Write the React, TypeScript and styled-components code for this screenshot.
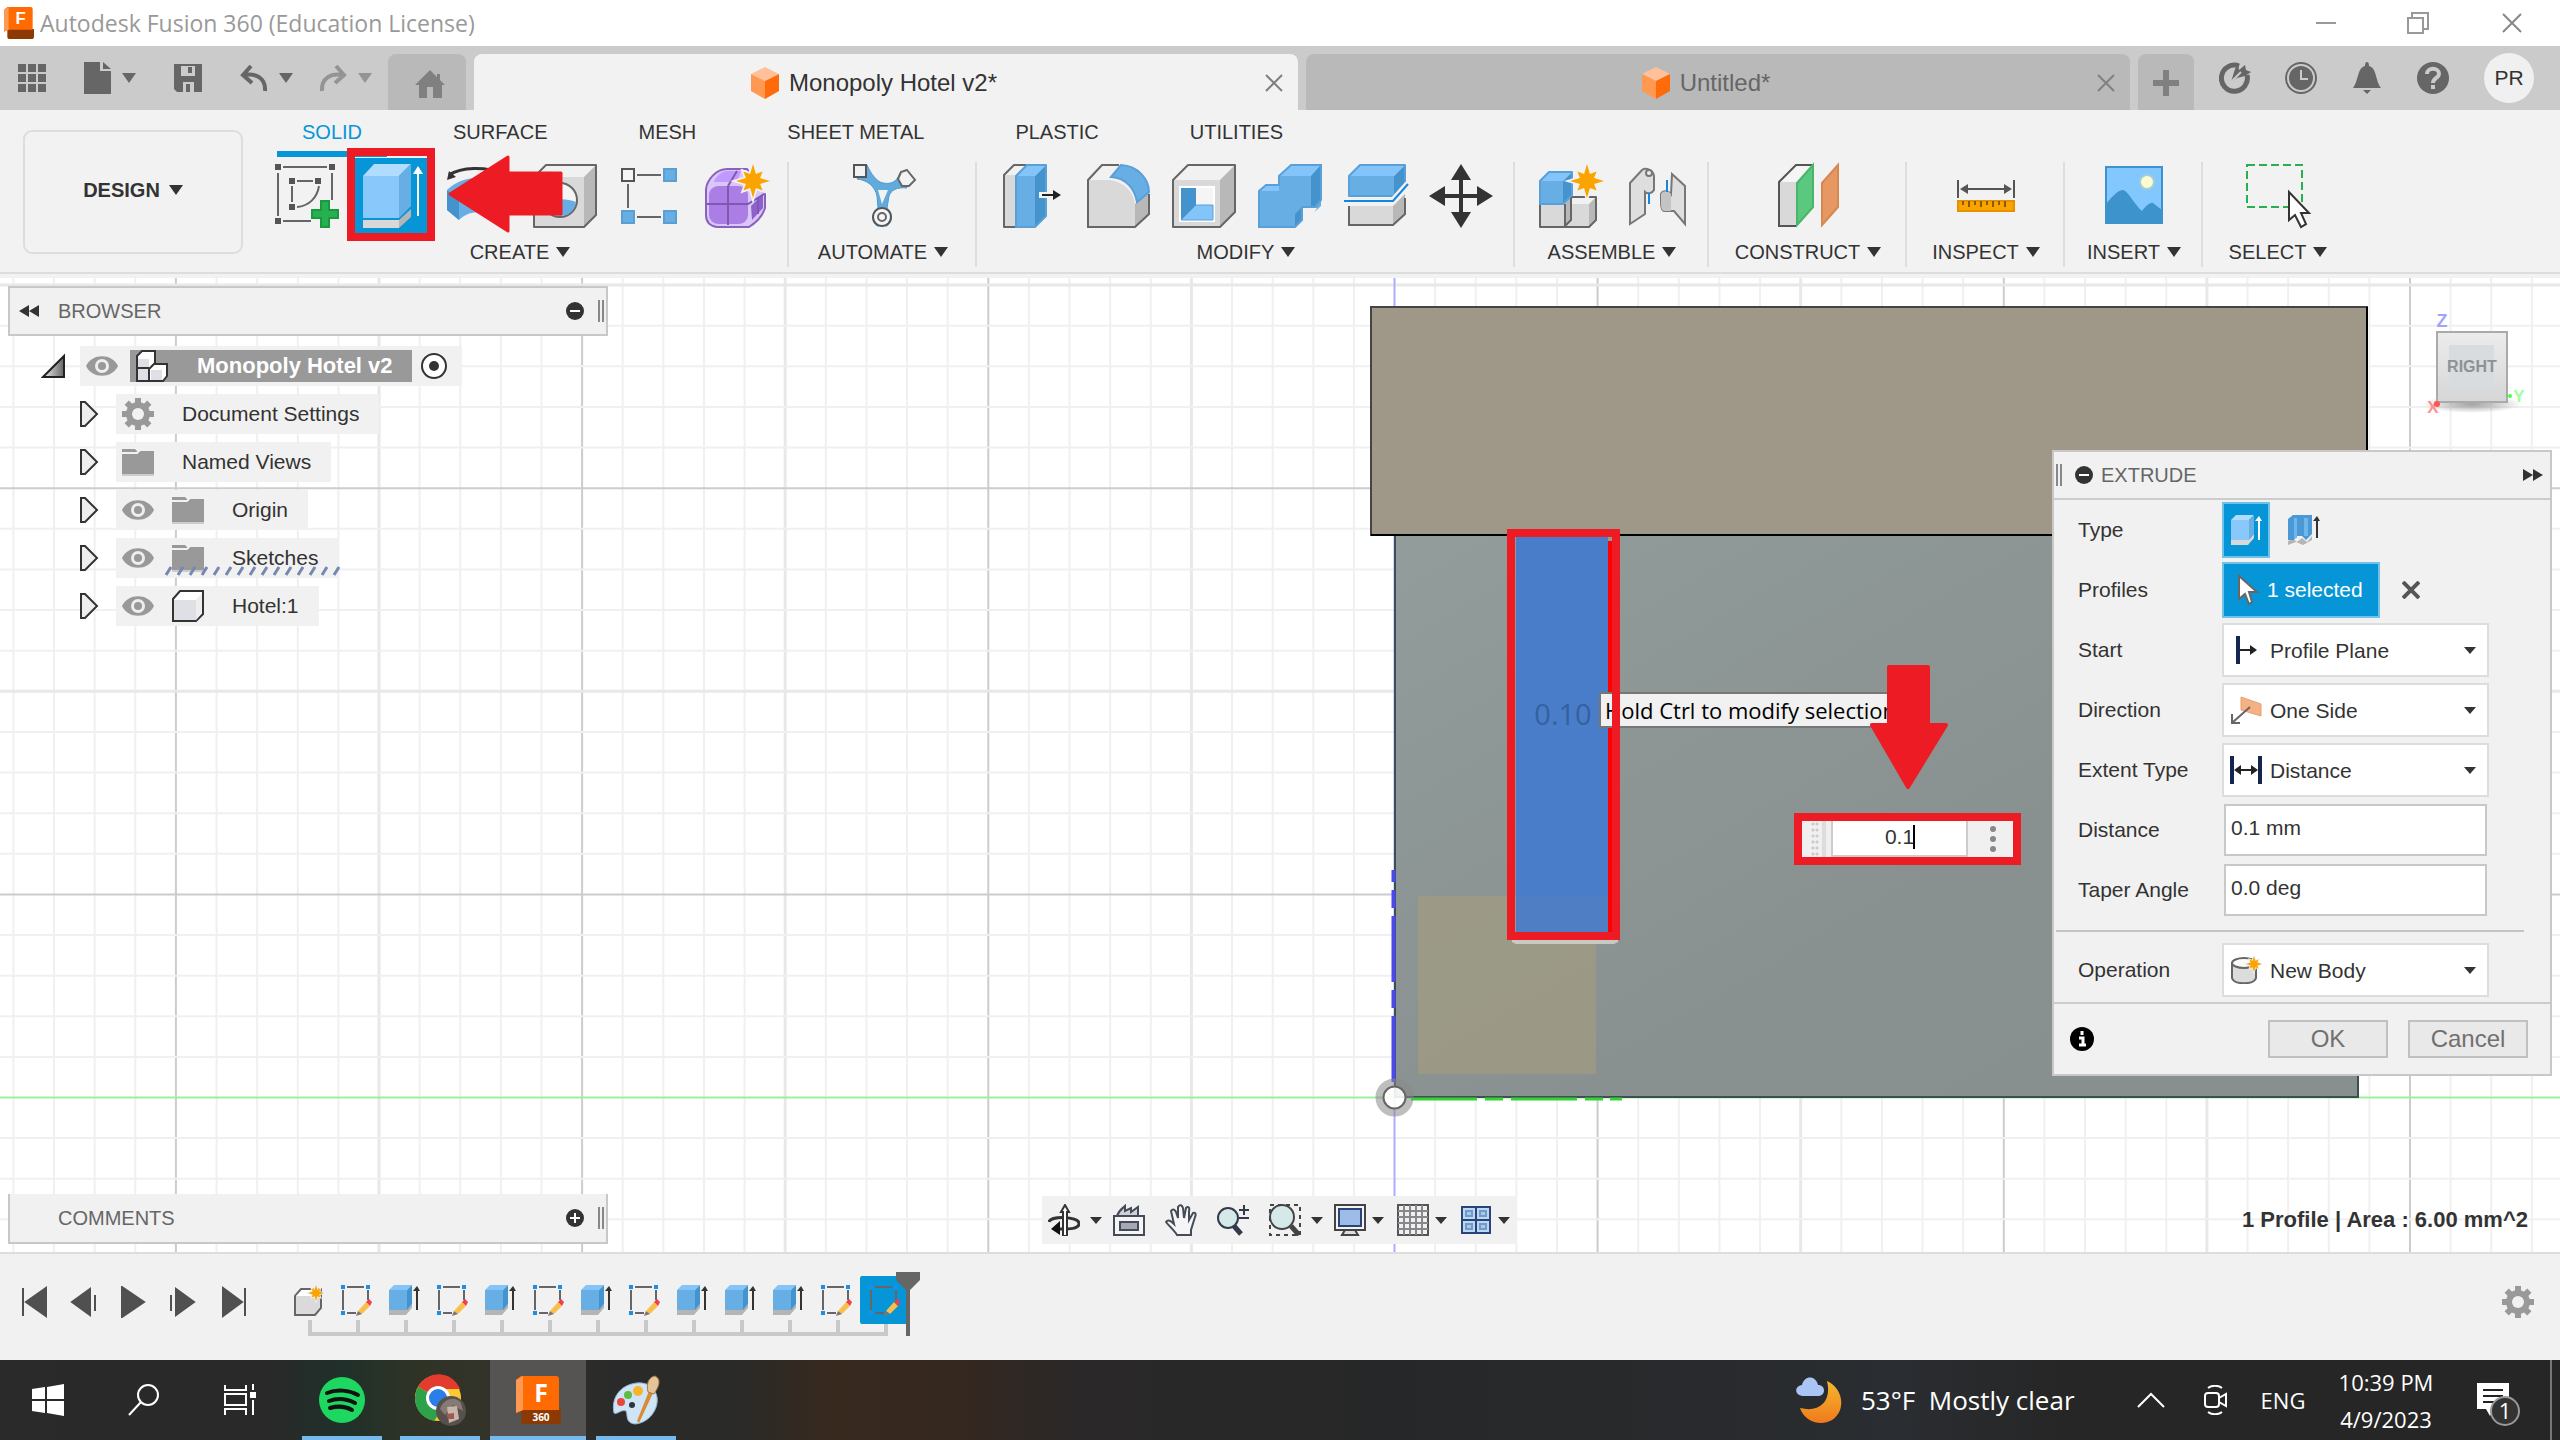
import React from "react";
import styled, { createGlobalStyle, css } from "styled-components";

const GlobalStyle = createGlobalStyle`
  *, *::before, *::after { box-sizing: border-box; }
  body { margin: 0; background: #f1f1f1; font-family: "Liberation Sans", Arial, sans-serif; color: #333; }
  button, input, select { font: inherit; color: inherit; margin: 0; padding: 0; border: 0; background: none; border-radius: 0; }
  button { cursor: pointer; }
  svg { display: block; flex: none; }
`;

const segoe = `"Open Sans", "Noto Sans", sans-serif`;
const red = "#ed1c24";
const blue = "#0696d7";

/* ---------- shared ---------- */

const Shell = styled.div`
  min-height: 100vh;
  display: flex;
  flex-direction: column;
  overflow: hidden;
`;

const Caret = styled.span<{ $tone?: string; $small?: boolean }>`
  display: inline-block;
  flex: none;
  width: 0;
  height: 0;
  border-style: solid;
  border-color: ${(p) => p.$tone || "#333"} transparent transparent;
  border-width: ${(p) => (p.$small ? "7px 6px 0" : "10px 7px 0")};
`;

const IconButton = styled.button<{ $w: number }>`
  display: flex;
  align-items: center;
  justify-content: center;
  flex: none;
  width: ${(p) => p.$w}px;
`;

/* ---------- title bar ---------- */

const TitleBar = styled.header`
  height: 46px;
  display: flex;
  align-items: center;
  background: #fff;
  padding-left: 4px;
`;

const AppTitle = styled.h1`
  flex: 1;
  margin: 0 0 0 6px;
  font: 400 23px/32px ${segoe};
  color: #999;
  white-space: nowrap;
`;

/* ---------- document tabs ---------- */

const TabBar = styled.nav`
  height: 64px;
  display: flex;
  align-items: stretch;
  gap: 8px;
  padding-top: 8px;
  background: #cbcbcb;
`;

const QuickTools = styled.div`
  width: 380px;
  flex: none;
  display: flex;
  align-items: center;
  padding: 0 0 8px 16px;
`;

const ToolWithCaret = styled.button<{ $gap: number }>`
  display: flex;
  align-items: center;
  gap: 11px;
  margin-left: ${(p) => p.$gap}px;
`;

const topTab = css`
  border-radius: 8px 8px 0 0;
  display: flex;
  align-items: center;
  justify-content: center;
  padding-top: 2px;
`;

const SquareTab = styled.button<{ $w: number }>`
  ${topTab}
  width: ${(p) => p.$w}px;
  flex: none;
  background: #b9b9b9;
`;

const HomeTab = styled(SquareTab)`
  padding: 4px 0 0 6px;
`;

const DocTab = styled.div<{ $active?: boolean }>`
  ${topTab}
  flex: 1;
  padding-left: 24px;
  background: ${(p) => (p.$active ? "#f2f2f2" : "#b9b9b9")};
  color: ${(p) => (p.$active ? "#333" : "#666")};
`;

const DocName = styled.button`
  flex: 1;
  display: flex;
  align-items: center;
  justify-content: center;
  gap: 10px;
  font-size: 24px;
  line-height: 30px;
`;

const Account = styled.div`
  width: 358px;
  flex: none;
  display: flex;
  align-items: center;
  padding-bottom: 8px;
`;

const Avatar = styled.button`
  width: 50px;
  height: 50px;
  margin-left: 18px;
  border-radius: 50%;
  background: #f0f0f0;
  font-size: 21px;
`;

/* ---------- ribbon ---------- */

const Ribbon = styled.section`
  height: 168px;
  display: flex;
  gap: 8px;
  padding-left: 23px;
  background: linear-gradient(#f2f2f2 162px, #ddd 162px, #ddd 164px, #f2f2f2 164px);
`;

const DesignButton = styled.button`
  width: 220px;
  height: 124px;
  flex: none;
  margin-top: 20px;
  padding-bottom: 4px;
  border: 2px solid #ddd;
  border-radius: 9px;
  display: flex;
  align-items: center;
  justify-content: center;
  gap: 9px;
  font-size: 20px;
  font-weight: 700;
`;

const RibbonMain = styled.div`
  flex: 1;
`;

const RibbonTabs = styled.div`
  display: flex;
  gap: 41px;
  height: 48px;
  padding-left: 26px;
`;

const RibbonTab = styled.button<{ $active?: boolean }>`
  height: 47px;
  padding: 4px 25px 0;
  font-size: 20px;
  color: ${(p) => (p.$active ? blue : "#333")};
  border-bottom: 6px solid ${(p) => (p.$active ? blue : "transparent")};
  white-space: nowrap;
`;

const Groups = styled.div`
  display: flex;
`;

const Group = styled.div<{ $w: number }>`
  position: relative;
  width: ${(p) => p.$w}px;
  display: flex;
  flex-direction: column;
  align-items: center;
  &:not(:last-child)::after {
    content: "";
    position: absolute;
    right: 0;
    top: 4px;
    bottom: -2px;
    width: 2px;
    background: #dedede;
  }
`;

const GroupIcons = styled.div`
  display: flex;
  gap: 14px;
`;

const CommandButton = styled.button<{ $active?: boolean }>`
  position: relative;
  width: 72px;
  height: 76px;
  display: flex;
  align-items: center;
  justify-content: center;
  background: ${(p) => (p.$active ? blue : "none")};
`;

const GroupLabel = styled.button`
  display: flex;
  align-items: center;
  gap: 7px;
  margin-top: 5px;
  font-size: 20px;
  line-height: 26px;
  white-space: nowrap;
`;

const CommandMark = styled.span`
  position: absolute;
  inset: -10px -8px -7px;
  border: 8px solid ${red};
  z-index: 2;
`;

const PointerMark = styled.svg`
  position: absolute;
  left: 93px;
  top: -3px;
  z-index: 3;
`;

/* ---------- canvas ---------- */

const Canvas = styled.main`
  position: relative;
  flex: 1;
  min-height: 974px;
  overflow: hidden;
  background: #fff;
`;

const Scene = styled.svg`
  position: absolute;
  inset: 0;
  width: 100%;
  height: 100%;
`;

const MarkLayer = styled(Scene)`
  pointer-events: none;
`;

const BrowserArea = styled.aside`
  position: absolute;
  left: 8px;
  top: 8px;
  width: 600px;
`;

const PanelBar = styled.div`
  display: flex;
  align-items: center;
  height: 50px;
  border: 2px solid #c8c8c8;
  background: #f1f1f1;
  color: #666;
  font-size: 20px;
`;

const PanelCollapse = styled.button`
  width: 48px;
  padding-left: 9px;
`;

const PanelTitle = styled.h2`
  flex: 1;
  margin: 0;
  font-size: 20px;
  font-weight: 400;
`;

const Grip = styled.span`
  width: 6px;
  height: 22px;
  border: solid #888;
  border-width: 0 2px;
  margin: 0 2px 0 14px;
`;

const CommentsPanel = styled.section`
  position: absolute;
  left: 8px;
  bottom: 8px;
  width: 600px;
  & > div { border-top: 0; }
`;

const Tree = styled.ul`
  list-style: none;
  margin: 10px 0 0;
  padding: 0;
  display: flex;
  flex-direction: column;
  gap: 8px;
`;

const TreeRow = styled.li<{ $root?: boolean }>`
  display: flex;
  align-items: center;
  height: 40px;
  padding-left: ${(p) => (p.$root ? 33 : 71)}px;
  gap: ${(p) => (p.$root ? 14 : 17)}px;
  font-size: 21px;
`;

const TreeItem = styled.div`
  position: relative;
  height: 40px;
  display: flex;
  align-items: center;
  gap: 18px;
  padding: 0 20px 0 6px;
  background: #f1f1f1;
`;

const TreeName = styled.button`
  padding-left: 10px;
  white-space: nowrap;
`;

const RootItem = styled(TreeItem)`
  gap: 8px;
  padding-right: 14px;
`;

const RootName = styled.button`
  height: 32px;
  display: flex;
  align-items: center;
  gap: 29px;
  padding: 0 19px 0 6px;
  margin-left: 4px;
  background: #999;
  color: #fff;
  font-size: 22px;
  font-weight: 700;
  white-space: nowrap;
`;

const Squiggle = styled.svg`
  position: absolute;
  left: 48px;
  bottom: 2px;
`;

const NavBar = styled.div`
  position: absolute;
  left: 50%;
  bottom: 8px;
  margin-left: -238px;
  height: 48px;
  display: flex;
  align-items: center;
  gap: 20px;
  padding: 0 7px 0 6px;
  background: #f1f1f1;
`;

const NavButton = styled.button<{ $tight?: boolean }>`
  display: flex;
  align-items: center;
  gap: ${(p) => (p.$tight ? 6 : 10)}px;
  margin-right: ${(p) => (p.$tight ? -7 : -9)}px;
  &:nth-child(n + 2):nth-child(-n + 4) { margin-right: 0; }
  &:last-child { margin-right: 0; }
`;

const StatusText = styled.output`
  position: absolute;
  right: 32px;
  bottom: 18px;
  font-size: 22px;
  line-height: 28px;
  font-weight: 700;
`;

const Hint = styled.div`
  position: absolute;
  left: 1599px;
  top: 414px;
  height: 36px;
  padding: 0 4px;
  border: 2px solid #777;
  background: #f1f1f1;
  color: #000;
  font: 400 22px/33px ${segoe};
  white-space: nowrap;
`;

const ValueBox = styled.div`
  position: absolute;
  left: 1794px;
  top: 535px;
  width: 227px;
  height: 52px;
  display: flex;
  align-items: stretch;
  border: 8px solid ${red};
  background: #f0f0f0;
`;

const ValueGrip = styled.span`
  width: 29px;
  background:
    linear-gradient(90deg, transparent 20px, #ddd 20px, #ddd 24px, transparent 24px),
    linear-gradient(90deg, #f0f0f0 9px, transparent 9px, transparent 17px, #f0f0f0 17px),
    radial-gradient(circle, #ccc 1px, transparent 2px) 9px 0 / 4px 6px;
`;

const ValueField = styled.label`
  position: relative;
  width: 137px;
`;

const ValueInput = styled.input`
  width: 100%;
  height: 100%;
  padding-bottom: 2px;
  border: solid #ccc;
  border-width: 0 2px 2px;
  background: #fff;
  text-align: center;
  font-size: 21px;
  outline: none;
  caret-color: transparent;
`;

const TextCaret = styled.span`
  position: absolute;
  left: 82px;
  top: 4px;
  width: 2px;
  height: 24px;
  background: #000;
`;

const ValueMenu = styled.button`
  flex: 1;
  display: flex;
  align-items: center;
  justify-content: center;
  padding-left: 4px;
`;

/* ---------- view cube ---------- */

const ViewCube = styled.button`
  position: absolute;
  right: 28px;
  top: 28px;
`;

/* ---------- extrude dialog ---------- */

const Dialog = styled.form`
  position: absolute;
  right: 8px;
  top: 172px;
  width: 500px;
  border: 2px solid #c8c8c8;
  background: #f1f1f1;
`;

const DialogHead = styled.div`
  height: 48px;
  display: flex;
  align-items: center;
  gap: 8px;
  padding: 0 7px 0 2px;
  border-bottom: 2px solid #ccc;
  color: #666;
`;

const DialogGrip = styled(Grip)`
  margin: 0 5px 0 0;
`;

const DialogRows = styled.div`
  display: flex;
  flex-direction: column;
  gap: 4px;
  padding: 2px 61px 4px 24px;
`;

const DialogRow = styled.div`
  display: flex;
  align-items: center;
  height: 56px;
  font-size: 21px;
`;

const RowLabel = styled.label`
  width: 144px;
  flex: none;
  white-space: nowrap;
`;

const TypeButton = styled.button<{ $active?: boolean }>`
  width: 48px;
  height: 56px;
  margin-right: 10px;
  display: flex;
  align-items: center;
  justify-content: center;
  border: 2px solid ${(p) => (p.$active ? "#6fc1e6" : "transparent")};
  background: ${(p) => (p.$active ? blue : "none")};
`;

const SelectionButton = styled.button`
  width: 158px;
  height: 56px;
  display: flex;
  align-items: center;
  gap: 8px;
  padding-left: 13px;
  border: 2px solid #6fc1e6;
  background: ${blue};
  color: #fff;
`;

const ClearButton = styled.button`
  margin-left: 22px;
`;

const SelectBox = styled.div`
  flex: 1;
  height: 54px;
  display: flex;
  align-items: center;
  padding: 0 11px 0 6px;
  gap: 8px;
  border: 2px solid #ddd;
  background: #fff;
`;

const Select = styled.select`
  flex: 1;
  height: 100%;
  appearance: none;
  outline: none;
`;

const TextField = styled.input`
  flex: 1;
  min-width: 0;
  height: 52px;
  margin: 0 2px;
  padding: 0 5px 4px;
  border: 2px solid #c8c8c8;
  background: #fff;
  outline: none;
`;

const Rule = styled.hr`
  width: 468px;
  margin: 8px 0 6px -22px;
  border: 0;
  border-top: 2px solid #c4c4c4;
`;

const DialogFoot = styled.div`
  height: 72px;
  display: flex;
  align-items: center;
  gap: 20px;
  padding: 0 22px 0 16px;
  border-top: 2px solid #ccc;
`;

const FootButton = styled.button`
  width: 120px;
  height: 38px;
  border: 2px solid #c0c0c0;
  background: #e9e9e9;
  color: #707070;
  font-size: 24px;
  line-height: 32px;
`;

const InfoButton = styled.button`
  margin-right: auto;
`;

/* ---------- timeline ---------- */

const Timeline = styled.section`
  height: 108px;
  display: flex;
  align-items: flex-start;
  border-top: 2px solid #ddd;
  background: #f1f1f1;
`;

const Playback = styled.div`
  width: 284px;
  display: flex;
  gap: 18px;
  padding: 32px 0 0 18px;
`;

const Track = styled.div`
  position: relative;
  padding-top: 22px;
`;

const Features = styled.div`
  position: relative;
  display: flex;
  z-index: 1;
`;

const Feature = styled.button<{ $active?: boolean }>`
  width: 48px;
  height: 48px;
  display: flex;
  align-items: center;
  justify-content: center;
  border-radius: 2px;
  background: ${(p) => (p.$active ? blue : "none")};
`;

const Bracket = styled.div`
  display: flex;
  margin: -4px 20px 0 24px;
  border: solid #c9c9c9;
  border-width: 0 4px 4px 0;
  height: 16px;
`;

const BracketStep = styled.span`
  flex: 1;
  border-left: 4px solid #c9c9c9;
`;

const Marker = styled.svg`
  position: absolute;
  right: -12px;
  top: 18px;
  z-index: 2;
`;

const SettingsButton = styled.button`
  margin: 32px 26px 0 auto;
`;

/* ---------- taskbar ---------- */

const Taskbar = styled.footer`
  height: 80px;
  display: flex;
  align-items: stretch;
  background: linear-gradient(90deg, #2a2a2a 0, #292929 270px, #20302a 340px, #2f3326 420px, #33332a 480px, #2a2a2a 620px, #2a2a28 740px, #38291f 830px, #35281f 950px, #2a2828 1080px, #262728 1400px, #2a2d31 1900px, #262626 2060px);
  color: #fff;
  font-family: ${segoe};
`;

const TaskButton = styled.button<{ $w: number; $line?: number; $active?: boolean }>`
  width: ${(p) => p.$w}px;
  display: flex;
  align-items: center;
  justify-content: center;
  background-color: ${(p) => (p.$active ? "#565452" : "transparent")};
  background-image: linear-gradient(#76b9ed, #76b9ed);
  background-size: ${(p) => p.$line || 0}px 4px;
  background-position: center bottom;
  background-repeat: no-repeat;
`;

const ActiveTask = styled(TaskButton)`
  margin-left: 6px;
`;

const Weather = styled.button`
  display: flex;
  align-items: center;
  gap: 19px;
  margin-left: auto;
  width: 324px;
  font-size: 26px;
  white-space: pre;
`;

const Lang = styled.button`
  width: 82px;
  padding-right: 16px;
  font-size: 22px;
`;

const Clock = styled.button`
  width: 108px;
  padding-top: 2px;
  font-size: 22px;
  line-height: 37px;
  white-space: nowrap;
`;

const ShowDesktop = styled.button`
  width: 10px;
  border-left: 2px solid #777;
`;

/* ---------- drawings ---------- */

type BoxProps = { x: number; y: number; w: number; h: number; d: number; c?: string[]; s?: string };
const GREY = ["#f1f1f1", "#d9d9d9", "#b8b8b8"];
const BLUE = ["#83c5fb", "#67aee5", "#4593cd"];

const Box = ({ x, y, w, h, d, c = GREY, s = "#666" }: BoxProps) => (
  <g strokeLinejoin="round">
    <path d={`M${x} ${y + d}l${d} ${-d}h${w - d}l${-d} ${d}z`} fill={c[0]} />
    <path d={`M${x + w} ${y}v${h - d}l${-d} ${d}v${d - h}z`} fill={c[2]} />
    <path d={`M${x} ${y + d}h${w - d}v${h - d}h${d - w}z`} fill={c[1]} />
    <path d={`M${x} ${y + d}l${d} ${-d}h${w - d}v${h - d}l${-d} ${d}h${d - w}z`} fill="none" stroke={s} strokeWidth="2" />
  </g>
);

const Star = ({ x, y, r }: { x: number; y: number; r: number }) => {
  const pts = Array.from({ length: 16 }, (_, i) => {
    const a = (i * Math.PI) / 8;
    const q = i % 2 ? r * 0.45 : i % 4 ? r * 0.8 : r;
    return `${(x + q * Math.sin(a)).toFixed(1)},${(y - q * Math.cos(a)).toFixed(1)}`;
  }).join(" ");
  return (
    <g>
      <polygon points={pts} fill="#f2f2f2" stroke="#f2f2f2" strokeWidth={r / 5} />
      <polygon points={pts} fill="#fba400" />
    </g>
  );
};

const I64 = ({ children }: { children: React.ReactNode }) => (
  <svg width="64" height="64" viewBox="0 0 64 64" overflow="visible">{children}</svg>
);

const SketchIcon = () => (
  <I64>
    <g stroke="#666" strokeWidth="2" fill="none">
      <path d="M10 3H54M5 9V52M59 9V36M10 57H38M24 17H40M19 22V38M24 43C36 42 44 34 46 22" />
    </g>
    <g fill="#555">
      {[[5, 3], [59, 3], [5, 57], [19, 17], [45, 17], [19, 43]].map(([x, y]) => (
        <rect key={`${x}-${y}`} x={x - 3} y={y - 3} width="6" height="6" />
      ))}
    </g>
    <path d="M48 37h8v9h9v8h-9v9h-8v-9h-9v-8h9z" fill="#26b050" stroke="#199a40" strokeWidth="2" />
  </I64>
);

const ExtrudeIcon = () => (
  <I64>
    <path d="M4 12L15 0H52L40 12z" fill="#b0dcff" />
    <path d="M4 12H40V54H4z" fill="#88c8fb" />
    <path d="M40 12L52 0V42L40 54z" fill="#67aee5" />
    <path d="M4 56H40V64H4z" fill="#d8d8d8" />
    <path d="M40 56L52 45V53L40 64z" fill="#b5b5b5" />
    <path d="M59 6V52" stroke="#fff" strokeWidth="2" />
    <path d="M54 10L59 2L64 10z" fill="#fff" />
  </I64>
);

const RevolveIcon = () => (
  <I64>
    <path d="M4 11C16 3 40 2 60 10" fill="none" stroke="#333" strokeWidth="3" />
    <path d="M2 16L4 7L11 13z" fill="#333" />
    <path d="M2 26C18 10 46 10 62 26V46L48 56C38 46 24 46 14 56L2 46z" fill="#67aee5" />
    <path d="M2 26L14 36V56L2 46z" fill="#4593cd" />
  </I64>
);

const HoleIcon = () => (
  <I64>
    <Box x={3} y={1} w={62} h={62} d={12} />
    <ellipse cx="29" cy="36" rx="17" ry="17" fill="#f5f5f5" stroke="#666" strokeWidth="2" />
    <path d="M13 40C21 34 35 34 45 38C43 48 37 52 29 52S15 48 13 40z" fill="#67aee5" />
  </I64>
);

const PatternIcon = () => (
  <I64>
    <path d="M20 11H44M11 20V44M20 53H44" stroke="#666" strokeWidth="2" />
    <rect x="5" y="5" width="12" height="12" fill="#f5f5f5" stroke="#555" strokeWidth="2" />
    {[[47, 5], [5, 47], [47, 47]].map(([x, y]) => (
      <rect key={`${x}-${y}`} x={x} y={y} width="12" height="12" fill="#67aee5" stroke="#5a9fd2" strokeWidth="2" />
    ))}
  </I64>
);

const FormIcon = () => (
  <I64>
    <path d="M3 25C4 16 13 5 24 5H44L62 30V44C60 51 54 58 46 63H14C7 62 3 58 3 51z" fill="#dac6f8" stroke="#8a62be" strokeWidth="2" />
    <path d="M11 17C16 8 21 7 26 7H38L34 18H11z" fill="#c19aff" />
    <rect x="6" y="22" width="39" height="38" rx="9" fill="#ab7ee6" />
    <path d="M48 42L60 30V44L49 56z" fill="#8d62c8" />
    <path d="M4 40H45L61 30M25 22V61M25 22L34 7M55 34V50" stroke="#8058b4" strokeWidth="2" fill="none" />
    <Star x={50} y={17} r={17} />
  </I64>
);

const AutomateIcon = () => (
  <I64>
    <path d="M6 15C16 16 24 22 26 32L27 44C20 48 20 58 26 62H36C42 58 42 48 36 44L38 32C40 26 46 23 56 24L49 9C45 20 38 20 32 19C26 18 20 10 16 1z" fill="#62a9dc" stroke="#4e9acf" strokeWidth="1" />
    <path d="M27 26H37L31 40z" fill="#f2f2f2" />
    <rect x="3" y="1" width="12" height="12" fill="#f2f2f2" stroke="#555" strokeWidth="2" />
    <path d="M56 6L64 16L58 22H51L47 15L50 8z" fill="#f2f2f2" stroke="#666" strokeWidth="2" />
    <circle cx="31" cy="53" r="9" fill="#f5f5f5" stroke="#555" strokeWidth="2" />
    <circle cx="31" cy="53" r="4" fill="none" stroke="#666" strokeWidth="2" />
  </I64>
);

const PressPullIcon = () => (
  <I64>
    <Box x={5} y={1} w={22} h={62} d={10} />
    <Box x={17} y={1} w={30} h={62} d={11} c={BLUE} s="#5aa0d8" />
    <path d="M40 31H58" stroke="#f2f2f2" strokeWidth="6" />
    <path d="M43 31H56" stroke="#222" strokeWidth="2" />
    <path d="M54 26L62 31L54 36z" fill="#222" />
  </I64>
);

const FilletIcon = () => (
  <I64>
    <path d="M3 16L17 1H40L62 34V50L50 63H3z" fill="#f1f1f1" />
    <path d="M50 40L64 28V50L50 63z" fill="#b8b8b8" />
    <path d="M3 16H24C40 18 48 28 50 40V63H3z" fill="#d9d9d9" />
    <path d="M26 13L36 1C54 2 64 16 64 28L52 38C50 26 42 14 26 13z" fill="#67aee5" stroke="#5aa0d8" strokeWidth="2" />
    <path d="M34 1H17L3 16V63H50L64 50V30" fill="none" stroke="#666" strokeWidth="2" />
  </I64>
);

const ShellIcon = () => (
  <I64>
    <Box x={2} y={1} w={62} h={62} d={15} />
    <path d="M8 22H44V58H8z" fill="#fff" />
    <path d="M10 24H42V56H10z" fill="#f5f5f5" />
    <path d="M10 24H25V41L10 56z" fill="#4593cd" />
    <path d="M25 41H42V56H10z" fill="#83c5fb" stroke="#5aa0d8" strokeWidth="1" />
  </I64>
);

const CombineIcon = () => (
  <I64>
    <path d="M2 27L9 21H22V12L34 1H64V42L52 53H45V56L38 63H2z" fill="#67aee5" />
    <path d="M22 12L34 1H64L54 12z" fill="#83c5fb" />
    <path d="M2 27L9 21H22V27z" fill="#83c5fb" />
    <path d="M54 12L64 1V36L58 43H54z" fill="#4593cd" />
    <path d="M38 50L45 43V56L38 63z" fill="#4593cd" />
    <path d="M46 44H60L54 54H46z" fill="#f2f2f2" />
    <path d="M2 27L9 21H22V12L34 1H64V36L58 43H45V56L38 63H2z" fill="none" stroke="#5aa0d8" strokeWidth="2" />
  </I64>
);

const SplitIcon = () => (
  <I64>
    <Box x={6} y={1} w={56} h={31} d={11} c={BLUE} s="#5aa0d8" />
    <path d="M6 42H50L62 30V50L50 61H6z" fill="#d9d9d9" />
    <path d="M50 42L62 30V50L50 61z" fill="#b8b8b8" />
    <path d="M6 42V61H50L62 50V34" fill="none" stroke="#666" strokeWidth="2" />
    <path d="M1 37H50L65 20" fill="none" stroke="#f2f2f2" strokeWidth="7" />
    <path d="M1 37H50L65 20" fill="none" stroke="#1485e0" strokeWidth="2" />
  </I64>
);

const MoveIcon = () => (
  <I64>
    <path d="M32 6V58M6 32H58" stroke="#333" strokeWidth="4" />
    <path d="M32 0L42 16H22zM32 64L42 48H22zM0 32L16 22V42zM64 32L48 22V42z" fill="#333" />
  </I64>
);

const ComponentIcon = () => (
  <I64>
    <Box x={28} y={33} w={31} h={30} d={7} />
    <Box x={3} y={33} w={31} h={30} d={7} />
    <path d="M28 40V63" stroke="#666" strokeWidth="2" />
    <Box x={3} y={8} w={32} h={32} d={9} c={BLUE} s="#5aa0d8" />
    <Star x={50} y={17} r={17} />
  </I64>
);

const JointIcon = () => (
  <I64>
    <path d="M7 19L19 6C23 3 30 6 31 12V26C29 30 24 30 22 28V50L7 60z" fill="#dedede" stroke="#777" strokeWidth="2" />
    <circle cx="26" cy="9" r="3" fill="#eee" stroke="#777" strokeWidth="2" />
    <path d="M26 29V40" stroke="#1485e0" strokeWidth="2" />
    <path d="M49 10L62 22V60L51 47H41C38 46 38 42 38 38V30C40 26 46 27 48 30z" fill="#dedede" stroke="#777" strokeWidth="2" />
    <path d="M38 30C40 26 46 27 48 30V47H41C38 46 38 42 38 38z" fill="#c4c4c4" />
    <path d="M44 16V28" stroke="#1485e0" strokeWidth="2" />
  </I64>
);

const ConstructIcon = () => (
  <I64>
    <path d="M3 18L20 1H36L20 18z" fill="#f5f5f5" />
    <path d="M3 18H20V62H3z" fill="#d9d9d9" />
    <path d="M20 62H3V18L20 1H36" fill="none" stroke="#555" strokeWidth="2" />
    <path d="M21 19L37 1V43L21 61z" fill="#5bc880" stroke="#48b46c" strokeWidth="2" />
    <path d="M46 19L62 1V43L46 61z" fill="#e69762" stroke="#d78751" strokeWidth="2" />
  </I64>
);

const InspectIcon = () => (
  <I64>
    <path d="M4 16V34M60 16V34M8 25H56" stroke="#555" strokeWidth="2" />
    <path d="M6 25L14 20V30zM58 25L50 20V30z" fill="#555" />
    <rect x="4" y="37" width="56" height="10" fill="#fba400" stroke="#e59200" strokeWidth="2" />
    <path d="M9 37V41M15 37V43M21 37V41M27 37V43M33 37V41M39 37V43M45 37V41M51 37V43" stroke="#8a5a00" strokeWidth="2" />
  </I64>
);

const InsertIcon = () => (
  <I64>
    <rect x="4" y="3" width="56" height="56" fill="#82c8ff" stroke="#3d93d0" strokeWidth="2" />
    <circle cx="45" cy="18" r="7" fill="#fffbd0" stroke="#9fcfd8" strokeWidth="2" />
    <path d="M4 40C12 30 17 26 21 26S34 42 40 47C44 42 48 38 51 39L60 46V60H4z" fill="#3d93cc" />
  </I64>
);

const SelectIcon = () => (
  <I64>
    <rect x="1" y="1" width="55" height="42" fill="none" stroke="#26b050" strokeWidth="2" strokeDasharray="8 4" />
    <path d="M43 28V56L49 51L55 63L60 60L55 49H63z" fill="#fff" stroke="#333" strokeWidth="2" />
  </I64>
);

const MiniExtrude = ({ dark = true }: { dark?: boolean }) => (
  <svg width="32" height="32" viewBox="0 0 32 32">
    <path d="M1 26H18L24 20V24L18 31H1z" fill={dark ? "#b5b5b5" : "#d8d8d8"} />
    <path d="M1 6L6 1H24L19 6z" fill={dark ? "#83c5fb" : "#b0dcff"} />
    <path d="M1 6H19V26H1z" fill={dark ? "#67aee5" : "#88c8fb"} />
    <path d="M19 6L24 1V20L19 26z" fill={dark ? "#4593cd" : "#67aee5"} />
    <path d="M29 4V26" stroke={dark ? "#333" : "#fff"} strokeWidth="2" />
    <path d="M25 7L29 2L32 7z" fill={dark ? "#333" : "#fff"} />
  </svg>
);

const ThinExtrude = () => (
  <svg width="32" height="32" viewBox="0 0 32 32">
    <path d="M0 27L5 25L9 28L14 24L19 28L24 22V26L15 31L8 28L0 31z" fill="#b5b5b5" />
    <path d="M0 5L5 1H24V20L18 26L14 22L9 22L6 26H0z" fill="#4a98d6" />
    <path d="M6 4H9V24H6zM16 4H20V22H16z" fill="#6fb6ea" />
    <path d="M29 4V24" stroke="#333" strokeWidth="2" />
    <path d="M25 7L29 2L32 7z" fill="#333" />
  </svg>
);

const MiniSketch = () => (
  <svg width="32" height="32" viewBox="0 0 32 32">
    <path d="M7 3H24M3 6V26M28 6V16M7 29H16" stroke="#666" strokeWidth="2" fill="none" />
    {[[1, 1], [26, 1], [1, 27]].map(([x, y]) => (
      <rect key={`${x}-${y}`} x={x} y={y} width="4" height="4" fill="#1790ea" />
    ))}
    <path d="M18 27L26 18L30 22L22 30z" fill="#fbc04c" />
    <path d="M26 18L29 15L32 18L30 22z" fill="#f23d4c" />
    <path d="M18 27L22 30L16 32z" fill="#777" />
  </svg>
);

const MiniBody = () => (
  <svg width="32" height="32" viewBox="0 0 32 32">
    <path d="M3 12L9 5H29V24L23 31H3z" fill="#dadada" stroke="#666" strokeWidth="2" />
    <path d="M4 12L10 6H22L20 12z" fill="#fff" />
    <Star x={24} y={9} r={8} />
  </svg>
);

const Eye = () => (
  <svg width="32" height="24" viewBox="0 0 32 24">
    <path d="M0 12C6 -1 26 -1 32 12C26 25 6 25 0 12z" fill="#999" />
    <circle cx="16" cy="12" r="7" fill="#eee" />
    <circle cx="16" cy="12" r="4" fill="#999" />
  </svg>
);

const Folder = () => (
  <svg width="32" height="28" viewBox="0 0 32 28">
    <path d="M0 1H13L15 3H32V26H0z" fill="#999" />
    <path d="M0 5H15L18 2" stroke="#f1f1f1" strokeWidth="2" fill="none" />
    <path d="M0 27H32" stroke="#ccc" strokeWidth="2" />
  </svg>
);

const Gear = () => (
  <svg width="32" height="32" viewBox="-16 -16 32 32">
    {[0, 45, 90, 135].map((a) => (
      <rect key={a} x="-3" y="-16" width="6" height="32" fill="#999" transform={`rotate(${a})`} />
    ))}
    <circle r="9" fill="none" stroke="#999" strokeWidth="6" />
    <circle r="6" fill="#f1f1f1" />
  </svg>
);

const Cube = () => (
  <svg width="32" height="32" viewBox="0 0 32 32">
    <path d="M1 9L8 1H31V24L24 31H1z" fill="#fff" stroke="#333" strokeWidth="2" />
    <path d="M2 10H24V30H2z" fill="#dfe0e6" />
    <path d="M24 10L30 3V23L24 30z" fill="#eee" />
  </svg>
);

const Cubes = () => (
  <svg width="32" height="32" viewBox="0 0 32 32">
    <path d="M1 6L6 1H19V14H31V26L27 31H1z" fill="#fff" stroke="#333" strokeWidth="2" />
    <path d="M2 9H13V30H2zM15 20H26V30H15z" fill="#dfe0e6" />
    <path d="M1 18H13M13 18V31M13 19L19 13" stroke="#333" strokeWidth="2" fill="none" />
  </svg>
);

const Expander = () => (
  <svg width="20" height="28" viewBox="0 0 20 28">
    <path d="M2 2H6L18 14L6 26H2z" fill="#eee" stroke="#333" strokeWidth="2" />
  </svg>
);

const RoundSign = ({ plus }: { plus?: boolean }) => (
  <svg width="18" height="18" viewBox="0 0 18 18">
    <circle cx="9" cy="9" r="9" fill="#333" />
    <path d={plus ? "M4 9H14M9 4V14" : "M4 9H14"} stroke="#fff" strokeWidth="2" />
  </svg>
);

const DoubleArrow = ({ right }: { right?: boolean }) => (
  <svg width="20" height="12" viewBox="0 0 20 12">
    <path d={right ? "M0 0L10 6L0 12zM10 0L20 6L10 12z" : "M20 0L10 6L20 12zM10 0L0 6L10 12z"} fill="#333" />
  </svg>
);

const DocCube = () => (
  <svg width="28" height="32" viewBox="0 0 28 32">
    <path d="M0 7L14 0L28 7L14 14z" fill="#ffc09a" />
    <path d="M0 7L14 14V32L0 24z" fill="#ff9850" />
    <path d="M28 7L14 14V32L28 24z" fill="#ff6b0a" />
  </svg>
);

const Cross = ({ size, tone, w = 2 }: { size: number; tone: string; w?: number }) => (
  <svg width={size} height={size} viewBox={`0 0 ${size} ${size}`}>
    <path d={`M1 1L${size - 1} ${size - 1}M${size - 1} 1L1 ${size - 1}`} stroke={tone} strokeWidth={w} />
  </svg>
);

const FusionLogo = ({ size, label }: { size: number; label?: boolean }) => (
  <svg width={size} height={size * 1.07} viewBox="0 0 45 48">
    <path d="M5 33H45V45Q45 48 42 48H8Q5 48 5 45z" fill="#8c3a04" />
    <path d="M0 4L5 0H40Q43 0 43 3V34H7L0 37z" fill="#ff6b00" />
    <path d="M0 4L7 0V34L0 37z" fill="#ff9850" />
    <text x="25" y="26" fontSize="25" fontWeight="700" fill="#fff" textAnchor="middle">F</text>
    {label && <text x="25" y="45" fontSize="10" fontWeight="700" fill="#fff" textAnchor="middle">360</text>}
  </svg>
);

/* ---------- scene data ---------- */

const MINOR = 40.62;
const AX = 1394.5;
const AY = 819.5;
const thickColumns = [-5, -3, -1, 2, 4];

const gridColumns = Array.from({ length: 64 }, (_, i) => i - 34).filter((n) => n !== 0);
const gridRows = Array.from({ length: 25 }, (_, i) => i - 21).filter((n) => n !== 0);

const lineStyle = (n: number, thick: boolean) => {
  if (n % 5) return { stroke: "#f0f0f0", strokeWidth: 2 };
  return thick ? { stroke: "#e8e8e8", strokeWidth: 3 } : { stroke: "#cccccc", strokeWidth: 2 };
};

const ModelScene = () => (
  <Scene viewBox="0 0 2560 974" preserveAspectRatio="xMidYMid slice">
    <defs>
      <linearGradient id="wall" x1="0" y1="0" x2="1" y2="1">
        <stop offset="0" stopColor="#929c9a" />
        <stop offset="0.6" stopColor="#88918f" />
        <stop offset="1" stopColor="#87908e" />
      </linearGradient>
    </defs>
    {gridColumns.map((n) => (
      <line key={n} x1={AX + n * MINOR} x2={AX + n * MINOR} y1="0" y2="974" {...lineStyle(n, thickColumns.includes(n / 5))} />
    ))}
    {gridRows.map((n) => (
      <line key={n} y1={AY + n * MINOR} y2={AY + n * MINOR} x1="0" x2="2560" {...lineStyle(n, n % 10 === 0)} />
    ))}
    <path d="M0 819.5H2560" stroke="#9cf09c" strokeWidth="2" />
    <path d="M1394.5 0V974" stroke="#adadff" strokeWidth="2" />
    <rect x="1395" y="257" width="963" height="562" fill="url(#wall)" stroke="#3d4f50" strokeWidth="2" />
    <rect x="1371" y="29" width="996" height="228" fill="#9f9788" stroke="#444" strokeWidth="2" />
    <path d="M1371 257H2367V29" fill="none" stroke="#000" strokeWidth="2" />
    <rect x="1516" y="259" width="92" height="396" fill="#4a7dc9" />
    <rect x="1418" y="618" width="178" height="178" fill="#a49c80" fillOpacity="0.65" />
    <rect x="1516" y="618" width="92" height="38" fill="#4f7ec4" />
    <rect x="1608" y="263" width="5" height="392" fill="#f00" />
    <text x="1563" y="447" fontSize="29" fill="#34619f" textAnchor="middle" fontFamily="Open Sans, sans-serif">0.10</text>
    <path d="M1512 662H1618V664L1614 666H1516L1512 664z" fill="#c9c8c3" />
    <path d="M1393.5 592V804" stroke="#4a4aec" strokeWidth="4" strokeDasharray="12 8 18 8 66 8 18 8 80" />
    <path d="M1411 821H1622" stroke="#35d435" strokeWidth="3" strokeDasharray="66 8 18 8 66 8 18 7 12" />
    <circle cx="1394.5" cy="819.5" r="15" fill="none" stroke="#888" strokeOpacity="0.55" strokeWidth="8" />
    <circle cx="1394.5" cy="819.5" r="11" fill="#fff" fillOpacity="0.9" stroke="#666" strokeWidth="2" />
  </Scene>
);

const Marks = () => (
  <MarkLayer viewBox="0 0 2560 974" preserveAspectRatio="xMidYMid slice">
    <rect x="1511" y="255" width="105" height="403" fill="none" stroke={red} strokeWidth="8" />
    <path d="M1889 389H1928V447H1946L1908 509L1872 447H1889z" fill={red} stroke={red} strokeWidth="4" strokeLinejoin="round" />
  </MarkLayer>
);

const groups: { name: string; w: number; icons: [string, React.ReactNode][] }[] = [
  { name: "CREATE", w: 538, icons: [["Create sketch", <SketchIcon />], ["Extrude", <ExtrudeIcon />], ["Revolve", <RevolveIcon />], ["Hole", <HoleIcon />], ["Pattern", <PatternIcon />], ["Create form", <FormIcon />]] },
  { name: "AUTOMATE", w: 188, icons: [["Automated modeling", <AutomateIcon />]] },
  { name: "MODIFY", w: 538, icons: [["Press pull", <PressPullIcon />], ["Fillet", <FilletIcon />], ["Shell", <ShellIcon />], ["Combine", <CombineIcon />], ["Split body", <SplitIcon />], ["Move", <MoveIcon />]] },
  { name: "ASSEMBLE", w: 194, icons: [["New component", <ComponentIcon />], ["Joint", <JointIcon />]] },
  { name: "CONSTRUCT", w: 198, icons: [["Offset plane", <ConstructIcon />]] },
  { name: "INSPECT", w: 158, icons: [["Measure", <InspectIcon />]] },
  { name: "INSERT", w: 138, icons: [["Canvas", <InsertIcon />]] },
  { name: "SELECT", w: 150, icons: [["Select", <SelectIcon />]] },
];

const treeRows: { name: string; icons: React.ReactNode[]; late?: boolean }[] = [
  { name: "Document Settings", icons: [<Gear key="g" />] },
  { name: "Named Views", icons: [<Folder key="f" />] },
  { name: "Origin", icons: [<Eye key="e" />, <Folder key="f" />] },
  { name: "Sketches", icons: [<Eye key="e" />, <Folder key="f" />], late: true },
  { name: "Hotel:1", icons: [<Eye key="e" />, <Cube key="c" />] },
];

const features = ["body", "sketch", "extrude", "sketch", "extrude", "sketch", "extrude", "sketch", "extrude", "extrude", "extrude", "sketch", "sketch"];

const playback: [string, string][] = [
  ["First", "M5 2V30M28 2V30L8 16z"],
  ["Previous", "M22 3V29L4 16zM27 9V25"],
  ["Play", "M4 1L26 16L4 31z"],
  ["Next", "M8 3V29L26 16zM3 9V25"],
  ["Last", "M5 2V30L24 16zM27 2V30"],
];

const navIcons: { name: string; caret?: boolean; tight?: boolean; art: React.ReactNode }[] = [
  { name: "Orbit", caret: true, art: (
    <g fill="none" stroke="#333" strokeWidth="3">
      <path d="M1 18C2 12 30 12 31 19S18 25 6 25" />
      <path d="M12 17L3 25L12 31z" fill="#111" stroke="none" />
      <path d="M15 32V8H13L17 1L21 8H19V32z" fill="#fff" strokeWidth="2" />
    </g>) },
  { name: "Look at", art: (
    <g stroke="#454b57" strokeWidth="2">
      <path d="M4 12C6 6 10 4 12 2V7L18 4V8L25 3V12" fill="#ccd0d8" />
      <rect x="1" y="12" width="30" height="19" fill="#f5f5f7" />
      <rect x="7" y="18" width="18" height="8" fill="#a5a9b5" />
    </g>) },
  { name: "Pan", art: (
    <path d="M12 31C9 26 4 22 1 18C3 15 6 17 9 20L6 7C8 4 10 6 11 8L13 14L13 3C15 0 17 1 18 4L19 14L21 4C23 2 25 3 24 7L24 16L28 9C31 8 31 11 30 13L26 26V31z" fill="#f5f5f7" stroke="#454b57" strokeWidth="2" />) },
  { name: "Zoom", art: (
    <g stroke="#333b4a" strokeWidth="2">
      <path d="M17 22L24 30" strokeWidth="5" />
      <circle cx="11" cy="14" r="10" fill="#d5e9ea" />
      <path d="M22 6H32M27 1V11M22 14H32" />
    </g>) },
  { name: "Zoom window", caret: true, art: (
    <g stroke="#444" strokeWidth="2">
      <rect x="1" y="1" width="30" height="30" fill="none" strokeDasharray="4 4" />
      <path d="M22 22L30 31" strokeWidth="5" />
      <circle cx="13" cy="13" r="12" fill="#d5e9e8" />
    </g>) },
  { name: "Display settings", caret: true, tight: true, art: (
    <g stroke="#444" strokeWidth="2">
      <rect x="1" y="1" width="30" height="25" fill="#f3f3f3" />
      <rect x="5" y="5" width="22" height="17" fill="#9dbde8" stroke="#2a4478" />
      <path d="M11 26L8 31H24L21 26z" fill="#ddd" />
    </g>) },
  { name: "Grid and snaps", caret: true, tight: true, art: (
    <g stroke="#555" strokeWidth="2">
      <rect x="1" y="1" width="30" height="30" fill="#f0f0f4" />
      <path d="M7 1V31M13 1V31M19 1V31M25 1V31M1 7H31M1 13H31M1 19H31M1 25H31" stroke="#888" />
    </g>) },
  { name: "Viewports", caret: true, tight: true, art: (
    <g stroke="#2a4478" strokeWidth="2" fill="#bdd6f2">
      <path d="M2 3H30V29H2zM16 3V29M2 16H30" />
      <path d="M6 7H12V12H6zM20 7H26V12H20zM6 20H12V25H6zM20 20H26V25H20z" fill="#a9c8ec" stroke="#7099cc" />
    </g>) },
];

type SelectFieldProps = { id: string; label: string; value: string; art: React.ReactNode };
const SelectField = ({ id, label, value, art }: SelectFieldProps) => (
  <DialogRow>
    <RowLabel htmlFor={id}>{label}</RowLabel>
    <SelectBox>
      <svg width="32" height="28" viewBox="0 0 32 28">{art}</svg>
      <Select id={id} defaultValue={value}><option>{value}</option></Select>
      <Caret $small />
    </SelectBox>
  </DialogRow>
);

const ExtrudeDialog = () => (
  <Dialog onSubmit={(e) => e.preventDefault()}>
    <DialogHead>
      <DialogGrip />
      <RoundSign />
      <PanelTitle>EXTRUDE</PanelTitle>
      <DoubleArrow right />
    </DialogHead>
    <DialogRows>
      <DialogRow>
        <RowLabel as="span">Type</RowLabel>
        <TypeButton type="button" $active aria-label="Solid extrude"><MiniExtrude dark={false} /></TypeButton>
        <TypeButton type="button" aria-label="Thin extrude"><ThinExtrude /></TypeButton>
      </DialogRow>
      <DialogRow>
        <RowLabel htmlFor="profiles">Profiles</RowLabel>
        <SelectionButton type="button" id="profiles">
          <svg width="22" height="32" viewBox="0 0 22 32">
            <path d="M2 2V25L8 20L12 30L15 28L12 18H20z" fill="#fff" stroke="#666" strokeWidth="2" />
          </svg>
          1 selected
        </SelectionButton>
        <ClearButton type="button" aria-label="Clear selection"><Cross size={18} tone="#555" w={4} /></ClearButton>
      </DialogRow>
      <SelectField id="start" label="Start" value="Profile Plane" art={
        <g><path d="M8 0V28" stroke="#14264f" strokeWidth="4" /><path d="M10 14H22" stroke="#222" strokeWidth="2" /><path d="M20 9L27 14L20 19z" fill="#222" /></g>} />
      <SelectField id="direction" label="Direction" value="One Side" art={
        <g><path d="M11 1L31 8V20L11 14z" fill="#f4b184" stroke="#e8a06e" /><path d="M20 11L3 26M2 18V27H10" stroke="#666" strokeWidth="2" fill="none" /></g>} />
      <SelectField id="extent" label="Extent Type" value="Distance" art={
        <g><path d="M2 0V28M30 0V28" stroke="#14264f" strokeWidth="4" /><path d="M8 14H24" stroke="#222" strokeWidth="2" /><path d="M11 9L4 14L11 19zM21 9L28 14L21 19z" fill="#222" /></g>} />
      <DialogRow>
        <RowLabel htmlFor="distance">Distance</RowLabel>
        <TextField id="distance" defaultValue="0.1 mm" />
      </DialogRow>
      <DialogRow>
        <RowLabel htmlFor="taper">Taper Angle</RowLabel>
        <TextField id="taper" defaultValue="0.0 deg" />
      </DialogRow>
      <Rule />
      <SelectField id="operation" label="Operation" value="New Body" art={
        <g><path d="M2 7V22C4 29 24 29 26 22V7z" fill="#dcdcdc" stroke="#666" strokeWidth="2" /><ellipse cx="14" cy="7" rx="12" ry="5" fill="#fafafa" stroke="#666" strokeWidth="2" /><Star x={24} y={8} r={8} /></g>} />
    </DialogRows>
    <DialogFoot>
      <InfoButton type="button" aria-label="Info">
        <svg width="24" height="24" viewBox="0 0 24 24">
          <circle cx="12" cy="12" r="12" fill="#000" />
          <path d="M12 4V8M9 11H13V18M9 18H16" stroke="#fff" strokeWidth="3" fill="none" />
        </svg>
      </InfoButton>
      <FootButton type="submit">OK</FootButton>
      <FootButton type="button">Cancel</FootButton>
    </DialogFoot>
  </Dialog>
);

const TreeView = () => (
  <Tree>
    <TreeRow $root>
      <svg width="25" height="26" viewBox="0 0 25 26">
        <defs><linearGradient id="open"><stop offset="0" stopColor="#eee" /><stop offset="1" stopColor="#666" /></linearGradient></defs>
        <path d="M2 24L23 3V24z" fill="url(#open)" stroke="#222" strokeWidth="2" />
      </svg>
      <RootItem>
        <Eye />
        <RootName><Cubes />Monopoly Hotel v2</RootName>
        <svg width="28" height="28" viewBox="0 0 28 28">
          <circle cx="14" cy="14" r="12" fill="#fff" stroke="#333" strokeWidth="2" />
          <circle cx="14" cy="14" r="5" fill="#333" />
        </svg>
      </RootItem>
    </TreeRow>
    {treeRows.map((row) => (
      <TreeRow key={row.name}>
        <Expander />
        <TreeItem>
          {row.icons}
          <TreeName>{row.name}</TreeName>
          {row.late && (
            <Squiggle width="180" height="10" viewBox="0 0 180 10">
              {Array.from({ length: 15 }, (_, i) => (
                <path key={i} d={`M${2 + i * 12} 9L${7 + i * 12} 1`} stroke="#7488b0" strokeWidth="3" />
              ))}
            </Squiggle>
          )}
        </TreeItem>
      </TreeRow>
    ))}
  </Tree>
);

const TopTabs = () => (
  <TabBar>
    <QuickTools>
      <IconButton $w={32} aria-label="Data panel">
        <svg width="28" height="28" viewBox="0 0 28 28" fill="#666">
          {[0, 10, 20].map((y) => [0, 10, 20].map((x) => <rect key={`${x}-${y}`} x={x} y={y} width="8" height="8" />))}
        </svg>
      </IconButton>
      <ToolWithCaret $gap={36} aria-label="File">
        <svg width="27" height="32" viewBox="0 0 27 32"><path d="M0 0H16V9H27V32H0zM19 0L27 7H19z" fill="#666" /></svg>
        <Caret $tone="#666" />
      </ToolWithCaret>
      <ToolWithCaret $gap={38} aria-label="Save">
        <svg width="28" height="28" viewBox="0 0 28 28">
          <path d="M0 0H28V28H3L0 25z" fill="#666" />
          <path d="M7 2H21V12H7zM9 18H20V28H9z" fill="#cbcbcb" />
          <path d="M14 3H18V9H14zM12 20H16V28H12z" fill="#666" />
        </svg>
      </ToolWithCaret>
      <ToolWithCaret $gap={38} aria-label="Undo">
        <svg width="28" height="28" viewBox="0 0 28 28">
          <path d="M11 2L3 11L12 19M4 11C16 9 26 14 25 27" fill="none" stroke="#666" strokeWidth="4" />
        </svg>
        <Caret $tone="#666" />
      </ToolWithCaret>
      <ToolWithCaret $gap={26} aria-label="Redo">
        <svg width="28" height="28" viewBox="0 0 28 28">
          <path d="M17 2L25 11L16 19M24 11C12 9 2 14 3 27" fill="none" stroke="#949494" strokeWidth="4" />
        </svg>
        <Caret $tone="#949494" />
      </ToolWithCaret>
    </QuickTools>
    <HomeTab $w={78} aria-label="Home">
      <svg width="30" height="28" viewBox="0 0 30 28"><path d="M15 0L22 7V4H25V10L30 15H27V28H18V17H12V28H4V15H0z" fill="#808080" /></svg>
    </HomeTab>
    <DocTab $active>
      <DocName><DocCube />Monopoly Hotel v2*</DocName>
      <IconButton $w={48} aria-label="Close tab"><Cross size={18} tone="#808080" /></IconButton>
    </DocTab>
    <DocTab>
      <DocName><DocCube />Untitled*</DocName>
      <IconButton $w={48} aria-label="Close tab"><Cross size={18} tone="#808080" /></IconButton>
    </DocTab>
    <SquareTab $w={56} aria-label="New tab">
      <svg width="26" height="26" viewBox="0 0 26 26"><path d="M13 0V26M0 13H26" stroke="#808080" strokeWidth="6" /></svg>
    </SquareTab>
    <Account>
      <IconButton $w={66} aria-label="Extensions">
        <svg width="32" height="32" viewBox="0 0 32 32">
          <path d="M20 4A13 13 0 1 0 28 13" fill="none" stroke="#666" strokeWidth="5" />
          <path d="M12 20L16 7L19 3L20 8L26 3L27 8L32 10L26 14L18 16z" fill="#666" />
          <path d="M10 22L22 10" stroke="#cbcbcb" strokeWidth="2" />
        </svg>
      </IconButton>
      <IconButton $w={66} aria-label="Job status">
        <svg width="32" height="32" viewBox="0 0 32 32">
          <circle cx="16" cy="16" r="15" fill="none" stroke="#666" strokeWidth="2" />
          <circle cx="16" cy="16" r="12" fill="#666" />
          <path d="M16 8V17H23" fill="none" stroke="#cbcbcb" strokeWidth="2" />
        </svg>
      </IconButton>
      <IconButton $w={66} aria-label="Notifications">
        <svg width="28" height="32" viewBox="0 0 28 32">
          <path d="M14 0C16 0 16 3 16 4C24 6 22 18 28 26H0C6 18 4 6 12 4C12 3 12 0 14 0zM10 28H18L14 32z" fill="#666" />
        </svg>
      </IconButton>
      <IconButton $w={66} aria-label="Help">
        <svg width="32" height="32" viewBox="0 0 32 32">
          <circle cx="16" cy="16" r="16" fill="#666" />
          <path d="M10 12C10 5 22 5 22 12C22 16 16 16 16 21M16 23V27" fill="none" stroke="#cbcbcb" strokeWidth="4" />
        </svg>
      </IconButton>
      <Avatar>PR</Avatar>
    </Account>
  </TabBar>
);

const RibbonBar = () => (
  <Ribbon>
    <DesignButton>DESIGN<Caret /></DesignButton>
    <RibbonMain>
      <RibbonTabs>
        {["SOLID", "SURFACE", "MESH", "SHEET METAL", "PLASTIC", "UTILITIES"].map((t) => (
          <RibbonTab key={t} $active={t === "SOLID"}>{t}</RibbonTab>
        ))}
      </RibbonTabs>
      <Groups>
        {groups.map((g) => (
          <Group key={g.name} $w={g.w}>
            <GroupIcons>
              {g.icons.map(([name, icon]) => (
                <CommandButton key={name} aria-label={name} $active={name === "Extrude"}>
                  {icon}
                  {name === "Extrude" && (
                    <>
                      <CommandMark />
                      <PointerMark width="116" height="78" viewBox="0 0 116 78">
                        <path d="M2 39L60 2V18H113V59H60V76z" fill={red} stroke={red} strokeWidth="3" strokeLinejoin="round" />
                      </PointerMark>
                    </>
                  )}
                </CommandButton>
              ))}
            </GroupIcons>
            <GroupLabel>{g.name}<Caret /></GroupLabel>
          </Group>
        ))}
      </Groups>
    </RibbonMain>
  </Ribbon>
);

const TaskbarRow = () => (
  <Taskbar>
    <TaskButton $w={96} aria-label="Start">
      <svg width="32" height="32" viewBox="0 0 32 32"><path d="M0 5L13 3V15H0zM15 3L32 0V15H15zM0 17H13V29L0 27zM15 17H32V32L15 29z" fill="#fff" /></svg>
    </TaskButton>
    <TaskButton $w={96} aria-label="Search">
      <svg width="32" height="32" viewBox="0 0 32 32" fill="none" stroke="#fff" strokeWidth="2"><circle cx="20" cy="11" r="10" /><path d="M13 18L1 31" /></svg>
    </TaskButton>
    <TaskButton $w={96} aria-label="Task view">
      <svg width="32" height="32" viewBox="0 0 32 32" fill="none" stroke="#fff" strokeWidth="2">
        <path d="M1 1V6H22V1M1 31V25H22V31M1 10H22V21H1zM29 0V6M29 16V31" /><rect x="27" y="9" width="4" height="4" fill="#fff" />
      </svg>
    </TaskButton>
    <TaskButton $w={108} $line={80} aria-label="Spotify">
      <svg width="46" height="46" viewBox="0 0 46 46">
        <circle cx="23" cy="23" r="23" fill="#1ed760" />
        <path d="M8 16C18 12 30 13 39 18M10 24C18 21 28 22 36 26M11 31C18 29 26 29 33 33" fill="none" stroke="#111" strokeWidth="4" strokeLinecap="round" />
      </svg>
    </TaskButton>
    <TaskButton $w={88} $line={80} aria-label="Chrome">
      <svg width="54" height="54" viewBox="0 0 54 54">
        <circle cx="25" cy="25" r="23" fill="#fcc934" />
        <path d="M25 25L5 14A23 23 0 0 1 47 16H27z" fill="#e33b2e" />
        <path d="M25 25L5 14A23 23 0 0 0 21 48L33 31z" fill="#2da24b" />
        <circle cx="25" cy="25" r="12" fill="#fff" />
        <circle cx="25" cy="25" r="9" fill="#2b7de9" />
        <circle cx="38" cy="38" r="15" fill="#57504c" />
        <path d="M27 36C30 26 42 22 48 30L50 38L40 32L32 42z" fill="#857a74" />
        <path d="M34 34L44 33L46 46L36 50z" fill="#c9b5ab" />
        <path d="M33 41L41 40V46H35z" fill="#9c5a50" />
      </svg>
    </TaskButton>
    <ActiveTask $w={96} $line={96} $active aria-label="Fusion 360"><FusionLogo size={45} label /></ActiveTask>
    <TaskButton $w={100} $line={80} aria-label="Paint">
      <svg width="50" height="50" viewBox="0 0 50 50">
        <path d="M26 8C8 10 0 24 3 38C6 40 10 34 15 36C17 40 14 48 24 49C38 48 48 34 46 22C44 12 36 7 26 8z" fill="#cfe4f4" stroke="#8fb5d2" strokeWidth="1" />
        <circle cx="10" cy="27" r="4" fill="#e8483c" />
        <circle cx="17" cy="20" r="4" fill="#5fbb46" />
        <circle cx="27" cy="16" r="5" fill="#f7b32b" />
        <circle cx="21" cy="30" r="3" fill="#2a3540" />
        <path d="M26 46L38 16L42 18L28 48z" fill="#d98a35" />
        <path d="M37 17C35 8 38 2 44 1C50 4 49 10 43 19z" fill="#e6c49a" stroke="#a5794a" strokeWidth="1" />
      </svg>
    </TaskButton>
    <Weather>
      <svg width="46" height="46" viewBox="0 0 46 46">
        <defs><linearGradient id="moon" x1="0" y1="0" x2="0" y2="1"><stop offset="0" stopColor="#f5b82e" /><stop offset="1" stopColor="#f07a1c" /></linearGradient></defs>
        <path d="M31 4C48 12 50 34 36 43C24 50 8 44 4 31C24 36 36 24 31 4z" fill="url(#moon)" />
        <path d="M8 19C-2 19 -2 9 6 8C8 -2 20 -2 22 8C30 8 30 19 22 19z" fill="#a9c4f5" />
      </svg>
      53°F  Mostly clear
    </Weather>
    <TaskButton $w={62} aria-label="Hidden icons">
      <svg width="28" height="16" viewBox="0 0 28 16"><path d="M1 15L14 2L27 15" fill="none" stroke="#fff" strokeWidth="2" /></svg>
    </TaskButton>
    <TaskButton $w={68} aria-label="Meet now">
      <svg width="24" height="30" viewBox="0 0 24 30" fill="none" stroke="#fff" strokeWidth="2"><rect x="1" y="8" width="14" height="14" rx="3" /><path d="M15 13L22 9V21L15 17M4 3C8 0 14 0 18 3M4 27C8 30 14 30 18 27" /></svg>
    </TaskButton>
    <Lang>ENG</Lang>
    <Clock>10:39 PM<br />4/9/2023</Clock>
    <TaskButton $w={110} aria-label="Notifications">
      <svg width="50" height="52" viewBox="0 0 50 52">
        <path d="M7 9H39V35H25L20 42L16 35H7z" fill="#fff" />
        <path d="M13 16H33M13 22H33M13 28H25" stroke="#222" strokeWidth="2" />
        <circle cx="35" cy="37" r="14" fill="#333" stroke="#999" strokeWidth="2" />
        <text x="35" y="45" fontSize="22" fill="#fff" textAnchor="middle">1</text>
      </svg>
    </TaskButton>
    <ShowDesktop aria-label="Show desktop" />
  </Taskbar>
);

export default function App() {
  return (
    <Shell>
      <GlobalStyle />
      <TitleBar>
        <FusionLogo size={30} />
        <AppTitle>Autodesk Fusion 360 (Education License)</AppTitle>
        <IconButton $w={92} aria-label="Minimize"><svg width="20" height="4" viewBox="0 0 20 4"><path d="M0 2H20" stroke="#999" strokeWidth="2" /></svg></IconButton>
        <IconButton $w={92} aria-label="Restore">
          <svg width="22" height="22" viewBox="0 0 22 22" fill="none" stroke="#999" strokeWidth="2"><path d="M1 6H16V21H1zM5 6V1H21V17H16" /></svg>
        </IconButton>
        <IconButton $w={96} aria-label="Close"><Cross size={20} tone="#888" /></IconButton>
      </TitleBar>
      <TopTabs />
      <RibbonBar />
      <Canvas>
        <ModelScene />
        <Hint>Hold Ctrl to modify selection</Hint>
        <ValueBox>
          <ValueGrip />
          <ValueField>
            <ValueInput aria-label="Distance value" defaultValue="0.1" />
            <TextCaret />
          </ValueField>
          <ValueMenu aria-label="Value options">
            <svg width="6" height="26" viewBox="0 0 6 26" fill="#888"><circle cx="3" cy="3" r="3" /><circle cx="3" cy="13" r="3" /><circle cx="3" cy="23" r="3" /></svg>
          </ValueMenu>
        </ValueBox>
        <Marks />
        <BrowserArea>
          <PanelBar>
            <PanelCollapse aria-label="Collapse browser"><DoubleArrow /></PanelCollapse>
            <PanelTitle>BROWSER</PanelTitle>
            <RoundSign />
            <Grip />
          </PanelBar>
          <TreeView />
        </BrowserArea>
        <CommentsPanel>
          <PanelBar>
            <PanelCollapse as="span" />
            <PanelTitle>COMMENTS</PanelTitle>
            <RoundSign plus />
            <Grip />
          </PanelBar>
        </CommentsPanel>
        <NavBar>
          {navIcons.map((n) => (
            <NavButton key={n.name} aria-label={n.name} $tight={n.tight}>
              <svg width="32" height="32" viewBox="0 0 32 32">{n.art}</svg>
              {n.caret && <Caret $small />}
            </NavButton>
          ))}
        </NavBar>
        <StatusText>1 Profile | Area : 6.00 mm^2</StatusText>
        <ViewCube aria-label="View cube">
          <svg width="110" height="112" viewBox="0 0 110 112">
            <defs>
              <linearGradient id="face" x1="0" y1="0" x2="0" y2="1"><stop offset="0" stopColor="#ececec" /><stop offset="1" stopColor="#d6d6d6" /></linearGradient>
              <radialGradient id="shade"><stop offset="0" stopColor="#777" stopOpacity="0.7" /><stop offset="1" stopColor="#777" stopOpacity="0" /></radialGradient>
            </defs>
            <ellipse cx="50" cy="98" rx="50" ry="9" fill="url(#shade)" />
            <rect x="15" y="26" width="70" height="70" fill="url(#face)" stroke="#aaa" strokeWidth="2" />
            <rect x="27" y="39" width="45" height="44" fill="#d9dcdf" />
            <text x="50" y="66" fontSize="16" fontWeight="700" fill="#8d9196" textAnchor="middle">RIGHT</text>
            <text x="20" y="21" fontSize="18" fontWeight="700" fill="#a3a3ff" textAnchor="middle">Z</text>
            <text x="11" y="107" fontSize="17" fontWeight="700" fill="#ff8f8f" textAnchor="middle">X</text>
            <text x="97" y="96" fontSize="17" fontWeight="700" fill="#a0ffa0" textAnchor="middle">Y</text>
            <circle cx="15" cy="98" r="3" fill="#f55" />
            <circle cx="88" cy="90" r="2" fill="#4f4" />
          </svg>
        </ViewCube>
        <ExtrudeDialog />
      </Canvas>
      <Timeline>
        <Playback>
          {playback.map(([name, d]) => (
            <IconButton key={name} $w={32} aria-label={name}>
              <svg width="32" height="32" viewBox="0 0 32 32"><path d={d} fill="#505050" stroke="#505050" strokeWidth="2" /></svg>
            </IconButton>
          ))}
        </Playback>
        <Track>
          <Features>
            {features.map((f, i) => (
              <Feature key={i} aria-label={f} $active={i === features.length - 1}>
                {f === "body" ? <MiniBody /> : f === "sketch" ? <MiniSketch /> : <MiniExtrude />}
              </Feature>
            ))}
          </Features>
          <Bracket>{features.slice(1).map((_, i) => <BracketStep key={i} />)}</Bracket>
          <Marker width="24" height="64" viewBox="0 0 24 64"><path d="M0 0H24V8L14 18V64H10V18L0 8z" fill="#666" /></Marker>
        </Track>
        <SettingsButton aria-label="Timeline settings"><Gear /></SettingsButton>
      </Timeline>
      <TaskbarRow />
    </Shell>
  );
}
